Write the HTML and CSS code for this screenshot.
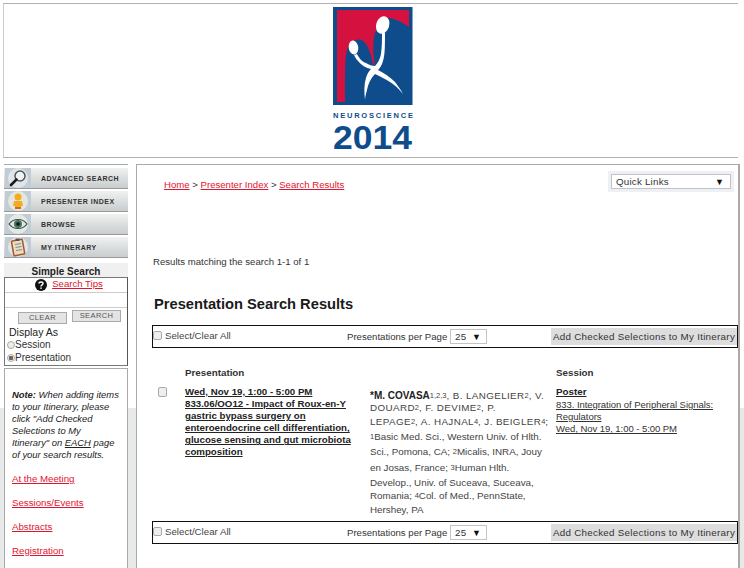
FILE: index.html
```html
<!DOCTYPE html>
<html lang="en">
<head>
<meta charset="utf-8">
<title>Presentation Search Results</title>
<link rel="stylesheet" href="styles.css">
</head>
<body>
<header class="banner">
  <svg class="logo" width="80" height="150" viewBox="333 7 80 150" role="img" aria-label="Neuroscience 2014">
    <rect x="333" y="7" width="79.500" height="98" fill="#0f4c8c"/>
    <path d="M337 10H409V27C402 22 394 18 388 18L376 30C372 40 373 55 375 65L373 64C371 54 368 44 362 40C356 38 350 42 347 50C345 58 345 70 345 102H337Z" fill="#d5123f"/>
    <ellipse cx="382.700" cy="25" rx="6.500" ry="9" transform="rotate(18 382.700 25)" fill="#fff"/>
    <ellipse cx="353.500" cy="47.500" rx="4.800" ry="7" transform="rotate(-8 353.500 47.500)" fill="#fff"/>
    <path d="M382 33H385C385 45 385 55 383 61C382 65 380 68 378 70C384 73 390 77 395 82C398 86 401 90 403 94C399 89 395 85 390 82C385 79 380 76 375 74C371 78 368 84 367 90C366 94 365 97 365 100C364 92 364 84 366 78C367 74 369 71 371 69C366 68 361 65 358 61C356 59 355 57 354 55L357 54C359 58 362 62 366 63C369 65 372 66 375 66C378 63 380 59 381 54C382 46 382 40 382 33Z" fill="#fff"/>
    <text x="333" y="118" class="logo-word" textLength="80" lengthAdjust="spacing">NEUROSCIENCE</text>
    <text x="333" y="149" class="logo-year" textLength="79" lengthAdjust="spacingAndGlyphs">2014</text>
  </svg>
</header>

<div class="page">
  <aside class="sidebar">
    <nav class="nav">
      <a class="nav-row" href="#">
        <span class="nav-icon">
          <svg width="24" height="20" viewBox="0 0 24 20"><circle cx="12" cy="10" r="10" fill="#dfe6ea"/><circle cx="14" cy="8" r="5" fill="#eef3f6" stroke="#555" stroke-width="1.500"/><path d="M10.500 11.500L5 17" stroke="#1a1a1a" stroke-width="2.500" stroke-linecap="round"/></svg>
        </span>
        <span class="nav-label">ADVANCED SEARCH</span>
      </a>
      <a class="nav-row" href="#">
        <span class="nav-icon">
          <svg width="24" height="20" viewBox="0 0 24 20"><circle cx="12" cy="10" r="10" fill="#e4e6e0"/><circle cx="12" cy="6" r="3.500" fill="#f2ad1c"/><path d="M8 10H16L17 15H15V18H9V15H7Z" fill="#f2ad1c"/><path d="M9 16H15V18H9Z" fill="#d9642a"/></svg>
        </span>
        <span class="nav-label">PRESENTER INDEX</span>
      </a>
      <a class="nav-row" href="#">
        <span class="nav-icon">
          <svg width="24" height="20" viewBox="0 0 24 20"><circle cx="12" cy="10" r="10" fill="#e4e8e6"/><path d="M3 10C7 4 17 4 21 10C17 16 7 16 3 10Z" fill="#dfe8e0" stroke="#3d4d45" stroke-width="1.200"/><circle cx="12" cy="10" r="4" fill="#3f7660"/><circle cx="12" cy="10" r="1.800" fill="#111"/></svg>
        </span>
        <span class="nav-label">BROWSE</span>
      </a>
      <a class="nav-row last" href="#">
        <span class="nav-icon">
          <svg width="24" height="20" viewBox="0 0 24 20"><circle cx="12" cy="10" r="10" fill="#e3e6e6"/><rect x="6.500" y="3" width="11" height="15" rx="1" transform="rotate(-10 12 10)" fill="#e9dcc0" stroke="#a4582a" stroke-width="1.500"/><path d="M9 7.500L15 6.500M9.500 10.500L15.500 9.500M10 13.500L16 12.500" stroke="#7f8c95"/><rect x="9.500" y="1.500" width="4" height="2.500" fill="#555"/></svg>
        </span>
        <span class="nav-label">MY ITINERARY</span>
      </a>
    </nav>

    <h2 class="search-title">Simple Search</h2>
    <form class="search-box">
      <div class="tips">
        <svg width="12" height="12" viewBox="0 0 12 12"><circle cx="6" cy="6" r="6" fill="#111"/><path d="M4 4.500C4 2.500 8 2.500 8 4.500C8 6 6 5.800 6 7.500" fill="none" stroke="#fff" stroke-width="1.400"/><rect x="5.300" y="8.400" width="1.400" height="1.500" fill="#fff"/></svg>
        <a class="red" href="#">Search Tips</a>
      </div>
      <div class="search-input"></div>
      <div class="search-buttons">
        <span class="small-btn clear">CLEAR</span>
        <span class="small-btn">SEARCH</span>
      </div>
      <div class="display-as">Display As</div>
      <label class="radio-row"><span class="radio"></span>Session</label>
      <label class="radio-row"><span class="radio on"></span>Presentation</label>
    </form>

    <div class="note-box">
      <p class="note"><b>Note:</b> When adding items<br>to your Itinerary, please<br>click "Add Checked<br>Selections to My<br>Itinerary" on <u>EACH</u> page<br>of your search results.</p>
      <a class="red side-link" href="#">At the Meeting</a>
      <a class="red side-link" href="#">Sessions/Events</a>
      <a class="red side-link" href="#">Abstracts</a>
      <a class="red side-link" href="#">Registration</a>
    </div>
  </aside>

  <main class="main">
    <div class="top-row">
      <div class="crumbs"><a class="red" href="#">Home</a> &gt; <a class="red" href="#">Presenter Index</a> &gt; <a class="red" href="#">Search Results</a></div>
      <div class="quick-wrap"><div class="select quick"><span>Quick Links</span><span class="arrow">▼</span></div></div>
    </div>
    <p class="matching">Results matching the search 1-1 of 1</p>
    <h1 class="title">Presentation Search Results</h1>

    <div class="bar">
      <label class="select-all"><span class="check"></span>Select/Clear All</label>
      <span class="per-page">Presentations per Page</span>
      <div class="select pages"><span>25</span><span class="arrow">▼</span></div>
      <span class="add-btn">Add Checked Selections to My Itinerary</span>
    </div>

    <div class="results">
      <div class="col-check"><span class="check row-check"></span></div>
      <div class="col-pres">
        <div class="col-head">Presentation</div>
        <a class="pres-link" href="#">Wed, Nov 19, 1:00 - 5:00 PM<br>833.06/OO12 - Impact of Roux-en-Y<br>gastric bypass surgery on<br>enteroendocrine cell differentiation,<br>glucose sensing and gut microbiota<br>composition</a>
      </div>
      <div class="col-auth">
        <span class="al first caps"><b>*M. COVASA</b><sup>1,2,3</sup>, B. LANGELIER<sup>2</sup>, V.</span>
        <span class="al tight caps">DOUARD<sup>2</sup>, F. DEVIME<sup>2</sup>, P.</span>
        <span class="al caps">LEPAGE<sup>2</sup>, A. HAJNAL<sup>4</sup>, J. BEIGLER<sup>4</sup>;</span>
        <span class="al"><sup>1</sup>Basic Med. Sci., Western Univ. of Hlth.</span>
        <span class="al">Sci., Pomona, CA; <sup>2</sup>Micalis, INRA, Jouy</span>
        <span class="al">en Josas, France; <sup>3</sup>Human Hlth.</span>
        <span class="al">Develop., Univ. of Suceava, Suceava,</span>
        <span class="al tight">Romania; <sup>4</sup>Col. of Med., PennState,</span>
        <span class="al">Hershey, PA</span>
      </div>
      <div class="col-sess">
        <div class="col-head">Session</div>
        <a class="sess-type" href="#">Poster</a>
        <a class="sess-link" href="#">833. Integration of Peripheral Signals:<br>Regulators<br>Wed, Nov 19, 1:00 - 5:00 PM</a>
      </div>
    </div>

    <div class="bar">
      <label class="select-all"><span class="check"></span>Select/Clear All</label>
      <span class="per-page">Presentations per Page</span>
      <div class="select pages"><span>25</span><span class="arrow">▼</span></div>
      <span class="add-btn">Add Checked Selections to My Itinerary</span>
    </div>
  </main>
</div>
</body>
</html>
```
FILE: styles.css
```css
* { box-sizing: border-box; }
html, body { height: 568px; overflow: hidden; }
body {
  margin: 0;
  padding-top: 3px;
  background: linear-gradient(#fff 0, #fff 408px, #e8eaea 408px);
  font-family: "Liberation Sans", Arial, sans-serif;
  font-size: 10px;
  color: #222;
}
a { color: inherit; }
.red { color: #e2142f; }

.banner {
  margin: 0 3px;
  width: 735px;
  height: 155px;
  border-top: 1px solid #b0b0b0;
  border-bottom: 1px solid #b0b0b0;
  border-left: 1px solid #ccc;
  background: #fff;
  display: flex;
  justify-content: center;
  align-items: flex-start;
  padding: 3px 0 0 3px;
}
.logo { display: block; }
.logo-word { font-size: 7.500px; font-weight: 700; fill: #0f4c8c; }
.logo-year { font-size: 33px; font-weight: 700; fill: #0f4c8c; }

.page {
  display: flex;
  align-items: flex-start;
  margin: 6px 0 0 4px;
  gap: 8px;
}

/* sidebar */
.sidebar { width: 124px; flex: none; background: #fff; }
.nav { border-top: 1px solid #aaa; padding-top: 3px; }
.nav-row {
  display: flex;
  align-items: center;
  height: 21px;
  margin-bottom: 2px;
  text-decoration: none;
  background: linear-gradient(#f0f1f1, #c9cdcd);
  border-bottom: 1px solid #999;
}
.nav-row.last { margin-top: 1px; margin-bottom: 1px; }
.nav-icon {
  width: 26px;
  height: 20px;
  margin-left: 1px;
  background: #c2ccd4;
  display: flex;
  align-items: center;
  justify-content: center;
}
.nav-label {
  margin-left: 10px;
  font-size: 7px;
  font-weight: 700;
  letter-spacing: .5px;
  white-space: nowrap;
  color: #333;
}
.search-title {
  margin: -1px 0 0;
  height: 19px;
  padding-top: 7px;
  font-size: 10px;
  line-height: 13px;
  text-align: center;
  color: #222;
  background: linear-gradient(#fff 0, #fff 5px, #f0f0f0 5px);
}
.search-box {
  height: 89px;
  border: 1px solid #777;
  border-right-color: #555;
  background: #fff;
}
.tips {
  display: flex;
  justify-content: center;
  align-items: flex-start;
  gap: 5px;
  height: 14px;
  padding: 1px 0 0 6px;
  font-size: 9.600px;
  line-height: 10px;
}
.search-input { height: 16px; border-top: 1px solid #ccc; border-bottom: 1px solid #ccc; }
.search-buttons {
  display: flex;
  align-items: flex-start;
  gap: 5px;
  padding: 2px 0 0 13px;
  height: 17px;
}
.small-btn {
  width: 49px;
  height: 12px;
  background: #e4e4e4;
  border: 1px solid #aaa;
  font-size: 7.500px;
  letter-spacing: .4px;
  line-height: 10px;
  text-align: center;
  color: #555;
}
.small-btn.clear { margin-top: 2px; }
.display-as { padding-left: 4px; font-size: 10.500px; line-height: 14px; height: 13px; }
.radio-row { display: flex; align-items: center; height: 13px; font-size: 10px; color: #333; }
.radio {
  width: 8px;
  height: 8px;
  margin-left: 2px;
  border-radius: 50%;
  border: 1px solid #aaa;
  background: #ececec;
}
.radio.on { background: radial-gradient(#666 0 2px, #eee 2.500px); }

.note-box {
  margin-top: 2px;
  height: 200px;
  border: 1px solid #aaa;
  border-bottom: 0;
  padding: 20px 7px 0;
  background: #fff;
}
.note { margin: 0 0 12px; font-style: italic; font-size: 9.400px; line-height: 12px; white-space: nowrap; }
.side-link { display: block; height: 24px; line-height: 12px; font-size: 9.700px; }

/* main */
.main {
  width: 604px;
  height: 420px;
  flex: none;
  border-top: 1px solid #aaa;
  border-left: 1px solid #aaa;
  border-right: 2px solid #aaa;
  background: #fff;
  padding-left: 15px;
}
.top-row {
  display: flex;
  justify-content: space-between;
  align-items: flex-start;
  padding: 6px 4px 0 12px;
  height: 86px;
}
.crumbs { padding-top: 8px; font-size: 9.600px; color: #333; }
.quick-wrap { padding: 3px; background: #edf1f5; }
.select {
  display: flex;
  justify-content: space-between;
  align-items: center;
  height: 15px;
  border: 1px solid #c4c4c4;
  background: #fff;
  font-size: 9.800px;
  letter-spacing: .2px;
  color: #333;
}
.quick { width: 120px; padding: 0 6px 0 4px; }
.arrow { font-size: 9px; color: #111; }
.matching { margin: 0; padding: 4px 0 0 1px; height: 44px; font-size: 9.600px; line-height: 14px; color: #333; }
.title { margin: 0; padding: 1px 0 0 2px; height: 30px; font-size: 14.700px; line-height: 17px; font-weight: 700; color: #1a1a1a; }
.bar {
  display: flex;
  align-items: center;
  width: 586px;
  height: 23px;
  border: 1px solid #111;
  background: #fff;
  color: #333;
}
.select-all { display: flex; align-items: center; width: 194px; font-size: 9.700px; color: #444; height: 16px; margin-bottom: 3px; }
.check {
  flex: none;
  width: 9px;
  height: 9px;
  margin-right: 3px;
  border: 1px solid #aaa;
  border-radius: 2px;
  background: #eee;
}
.per-page { width: 103px; font-size: 9.600px; white-space: nowrap; }
.pages { width: 37px; padding: 0 5px 0 4px; }
.add-btn {
  margin-left: 64px;
  width: 186px;
  height: 17px;
  background: #ddd;
  font-size: 9.800px;
  letter-spacing: .28px;
  line-height: 17px;
  text-align: center;
  white-space: nowrap;
  color: #333;
}

.results { display: flex; height: 173px; font-size: 9.800px; }
.col-check { width: 33px; padding: 39px 0 0 6px; }
.row-check { display: block; width: 9px; height: 10px; }
.col-pres { width: 185px; }
.col-head { padding-top: 19px; height: 38px; font-weight: 700; line-height: 12px; color: #333; }
.pres-link { display: block; font-size: 9.700px; font-weight: 700; line-height: 12.100px; color: #222; white-space: nowrap; }
.col-auth { width: 186px; padding-top: 42px; }
.al { display: block; height: 15.200px; line-height: 15px; white-space: nowrap; color: #444; }
.al.caps { letter-spacing: .4px; }
.al.first { height: 12px; line-height: 12px; }
.al.tight { height: 12px; line-height: 12px; }
.al b { color: #222; font-size: 10px; letter-spacing: 0; }
sup { font-size: 7.500px; line-height: 0; vertical-align: 1.500px; letter-spacing: 0; }
.sess-type { display: block; font-weight: 700; line-height: 12px; color: #222; }
.sess-link { display: block; margin-top: 1px; font-size: 9.500px; letter-spacing: -.05px; line-height: 12.200px; color: #333; white-space: nowrap; }
```
